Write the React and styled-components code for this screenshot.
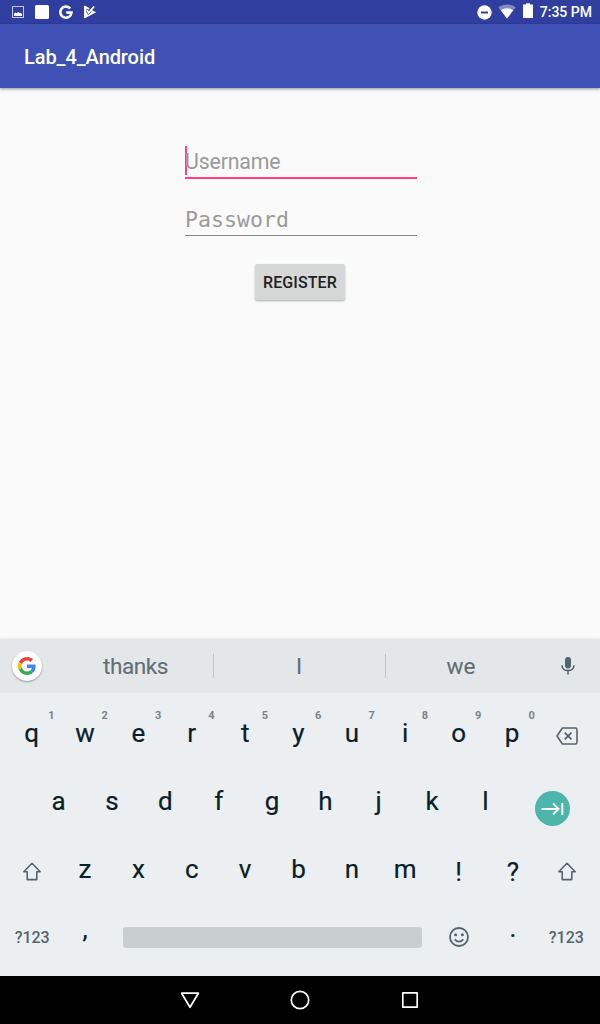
import React from "react";
import styled, { createGlobalStyle } from "styled-components";

const Global = createGlobalStyle`
  * { box-sizing: border-box; }
  body { margin: 0; background: #fafafa; font-family: Roboto, sans-serif; }
  svg { display: block; flex: none; }
`;
const Screen = styled.div`
  width: 600px; height: 1024px; display: flex; flex-direction: column; overflow: hidden; background: #fafafa;
`;
const StatusBar = styled.header`
  height: 24px; flex: none; display: flex; justify-content: space-between; background: #303f9f;
`;
const AppBar = styled.div`
  height: 64px; flex: none; padding: 1px 24px 0; display: flex; align-items: center; background: #3f51b5;
  box-shadow: 0 1px 3px rgba(0,0,0,.42); color: #fff; font-size: 20px; font-weight: 500; letter-spacing: -0.08px;
`;
const Clock = styled.span`
  color: #fff; font-size: 14px; font-weight: 500; line-height: 24px; padding-right: 8px;
`;
const StatusRight = styled.div`display: flex;`;
const Form = styled.main`
  flex: 1; display: flex; flex-direction: column; align-items: center; padding: 58px 0 0 2px;
`;
const Field = styled.label`
  display: flex; align-items: center; width: 232px; height: ${p => (p.$active ? 33 : 32)}px;
  margin-bottom: ${p => (p.$active ? 25 : 28)}px; padding-bottom: ${p => (p.$active ? 1 : 0)}px;
  border-bottom: ${p => (p.$active ? "2px solid #ff4081" : "1px solid #868686")};
  color: #9b9b9b; font-size: ${p => (p.$mono ? 21.5 : 21.3)}px; line-height: 30px;
  letter-spacing: ${p => (p.$mono ? 0.05 : -0.15)}px;
  font-family: ${p => (p.$mono ? '"DejaVu Sans Mono", monospace' : "Roboto, sans-serif")};
`;
const Caret = styled.i`width: 2px; height: 29px; margin: 0 -2px 1px 0; background: #ff4081;`;
const Placeholder = styled.span`padding-top: ${p => p.$drop || 0}px;`;
const Register = styled.button`
  width: 90px; height: 36px; border: 0; border-radius: 2px; padding: 1px 0 0; margin-right: 2px;
  background: #d6d8d7; color: #212121; letter-spacing: 0.1px;
  font: 500 16px Roboto, sans-serif; box-shadow: 0 1px 2px rgba(0,0,0,.32); white-space: nowrap;
`;
const Suggestions = styled.div`
  height: 54px; flex: none; display: flex; align-items: center; background: #e3e7ea; color: #616e74;
  font-size: 22.6px; box-shadow: 0 -1px 2px rgba(0,0,0,.06);
`;
const GoogleButton = styled.div`
  width: 30px; height: 30px; margin: 0 11px 0 12px; border-radius: 50%; background: #fff; display: flex;
  align-items: center; justify-content: center; box-shadow: 0 1px 2px rgba(0,0,0,.35);
`;
const Word = styled.span`
  width: ${p => p.$w}px; text-align: center; padding: 0 ${p => p.$pr || 0}px 0 ${p => p.$pl || 0}px;
  letter-spacing: ${p => p.$tracking || 0}px; -webkit-text-stroke: .1px currentColor;
`;
const Divider = styled.i`width: 1px; height: 24px; background: #bfc6c9;`;
const MicSlot = styled.div`flex: 1; display: flex; justify-content: center; padding-right: 1px;`;
const Keyboard = styled.section`
  height: 283px; flex: none; padding: 5px 8px 0 5px; background: #ebeff2; color: #0a2029;
`;
const Row = styled.div`
  display: grid; grid-template-columns: ${p => p.$columns || "repeat(11, minmax(0, 1fr))"};
  height: 68px; padding-left: ${p => p.$indent || 0}px;
`;
const Key = styled.div`
  position: relative; grid-column: span ${p => p.$span || 1}; min-width: 0; display: flex; align-items: center;
  justify-content: center; font-size: 26px; line-height: 30px; -webkit-text-stroke: .2px currentColor;
  padding: ${p => p.$drop ?? 2}px 0 ${p => p.$lift || 0}px ${p => p.$shift || 0}px;
`;
const Hint = styled.span`
  position: absolute; right: -1px; top: 11px; width: 16px; text-align: center; font-size: 11px; line-height: 13px;
  font-weight: 700; color: #78858b; -webkit-text-stroke: 0;
`;
const ModeLabel = styled.span`font-size: 16px; font-weight: 500; color: #54656d; -webkit-text-stroke: 0;`;
const SpaceBar = styled.div`width: 299px; height: 21px; flex: none; border-radius: 3px; background: #c9ced1;`;
const NextButton = styled.div`
  width: 35px; height: 35px; border-radius: 50%; background: #4db6ac; display: flex; align-items: center; justify-content: center;
`;
const NavBar = styled.nav`
  height: 48px; flex: none; display: flex; justify-content: center; align-items: center; gap: 86px; background: #000;
`;

const NotificationIcons = () => (
  <svg width="104" height="24" viewBox="0 0 104 24" fill="#fff">
    <rect x="12.5" y="6.5" width="11" height="11" fill="none" stroke="#c5cae6" />
    <path d="M14 16v-2.5l1.5-1 1 .8 2-1.3 1.2 1.2 1-.5 1.3 1.3v2z" />
    <rect x="35" y="5" width="14" height="14" rx="1.5" />
    <path d="M70.2 8.5A5.6 5.6 0 1 0 71.5 12.5H66.2" fill="none" stroke="#fff" strokeWidth="2.6" />
    <path d="M84 6.5Q84 5.3 85.1 5.8L89.8 8.3 88.6 9.6 86.7 8.8 86 11 88.3 13.5 91.6 10 96.3 12.2 85.2 18Q84 18.5 84 17.3z" />
    <path d="m86.6 10.2 2.2 2.3 5.3-6" fill="none" stroke="#fff" strokeWidth="1.8" />
    <path d="m86.3 12.2 2.3 2.2 3-3" fill="none" stroke="#303f9f" strokeWidth=".8" />
  </svg>
);
const SystemIcons = () => (
  <svg width="64" height="24" viewBox="476 0 64 24" fill="#fff">
    <circle cx="484.5" cy="12.5" r="7.2" />
    <path d="M481 11.5h7v2h-7z" fill="#303f9f" />
    <path d="M498.3 7.3q8.7-5.8 17.4 0L507 18.5z" opacity=".4" />
    <path d="M500.8 10.2q6.2-4 12.4 0L507 18.5z" />
    <path d="M523 4.5h3V3.3h4v1.2h3V18h-10z" />
  </svg>
);
const GoogleG = () => (
  <svg width="18" height="18" viewBox="0 0 48 48">
    <path fill="#ea4335" d="M24 9.5c3.5 0 6.7 1.2 9.2 3.6l6.9-6.9C35.9 2.4 30.5 0 24 0 14.6 0 6.5 5.4 2.6 13.2l8 6.2C12.4 13.7 17.7 9.5 24 9.5z" />
    <path fill="#4285f4" d="M47 24.6c0-1.6-.2-3.1-.4-4.6H24v9h12.9c-.6 3-2.2 5.5-4.7 7.2l7.7 6C44.4 38 47 31.8 47 24.6z" />
    <path fill="#fbbc05" d="M10.5 28.6a14.5 14.5 0 0 1 0-9.2l-8-6.2a24 24 0 0 0 0 21.6z" />
    <path fill="#34a853" d="M24 48c6.5 0 11.9-2.1 15.9-5.8l-7.7-6c-2.2 1.4-4.9 2.3-8.2 2.3-6.3 0-11.6-4.2-13.5-9.9l-8 6.2C6.5 42.6 14.6 48 24 48z" />
  </svg>
);
const Mic = () => (
  <svg width="16" height="20" viewBox="0 0 16 20" fill="none" stroke="#54656d" strokeWidth="1.6">
    <rect x="5" y="1" width="6" height="11.4" rx="3" fill="#54656d" stroke="none" />
    <path d="M2 9.2c0 3.2 2.5 5.3 6 5.3s6-2.1 6-5.3M8 14.5v4" />
  </svg>
);
const Backspace = () => (
  <svg width="22" height="18" viewBox="0 0 22 18" fill="none" stroke="#54656d" strokeWidth="1.6">
    <path d="M6.4 1h13.1q1.5 0 1.5 1.5v13q0 1.5-1.5 1.5H6.4L1 9z" strokeLinejoin="round" />
    <path d="m8.7 5.6 6.8 6.8m0-6.8-6.8 6.8" strokeWidth="1.8" />
  </svg>
);
const Shift = () => (
  <svg width="20" height="19" viewBox="0 0 20 19" fill="none" stroke="#54656d" strokeWidth="1.6">
    <path d="M10 1.3 18.2 9.7H14.8V17.6H5.2V9.7H1.8z" strokeLinejoin="round" />
  </svg>
);
const NextIcon = () => (
  <svg width="23" height="14" viewBox="0 0 23 14" fill="none" stroke="#fff" strokeWidth="2">
    <path d="M.5 7H17M12 1.5 17.5 7 12 12.5M21.3 1v12" />
  </svg>
);
const Smile = () => (
  <svg width="20" height="20" viewBox="0 0 20 20" fill="none" stroke="#54656d" strokeWidth="1.8">
    <circle cx="10" cy="10" r="9" />
    <path d="M5.7 12.3q4.3 4.8 8.6 0" />
    <circle cx="6.6" cy="7.8" r="1.5" fill="#54656d" stroke="none" />
    <circle cx="13.4" cy="7.8" r="1.5" fill="#54656d" stroke="none" />
  </svg>
);
const NavIcon = ({ children }) => (
  <svg width="24" height="24" viewBox="0 0 24 24" fill="none" stroke="#fff" strokeWidth="1.7" strokeLinejoin="round">{children}</svg>
);

export default function App() {
  return (
    <Screen>
      <Global />
      <StatusBar>
        <NotificationIcons />
        <StatusRight><SystemIcons /><Clock>7:35 PM</Clock></StatusRight>
      </StatusBar>
      <AppBar>Lab_4_Android</AppBar>
      <Form>
        <Field $active><Caret /><Placeholder $drop={2}>Username</Placeholder></Field>
        <Field $mono><Placeholder>Password</Placeholder></Field>
        <Register>REGISTER</Register>
      </Form>
      <Suggestions>
        <GoogleButton><GoogleG /></GoogleButton>
        <Word $w={160} $pl={5} $tracking={-0.45}>thanks</Word>
        <Divider />
        <Word $w={171} $pr={1}>I</Word>
        <Divider />
        <Word $w={150}>we</Word>
        <MicSlot><Mic /></MicSlot>
      </Suggestions>
      <Keyboard>
        <Row>
          {[..."qwertyuiop"].map((c, i) => <Key key={c}>{c}<Hint>{(i + 1) % 10}</Hint></Key>)}
          <Key $drop={7} $shift={3}><Backspace /></Key>
        </Row>
        <Row $indent={27} $columns="repeat(9, minmax(0, 1fr)) minmax(0, 1.5fr)">
          {[..."asdfghjkl"].map(c => <Key key={c}>{c}</Key>)}
          <Key $drop={17} $shift={2}><NextButton><NextIcon /></NextButton></Key>
        </Row>
        <Row>
          <Key $drop={6}><Shift /></Key>
          {[..."zxcvbnm"].map(c => <Key key={c}>{c}</Key>)}
          <Key $drop={7}>!</Key>
          <Key $drop={7} $shift={2}>?</Key>
          <Key $drop={6} $shift={3}><Shift /></Key>
        </Row>
        <Row>
          <Key $drop={4} $shift={1}><ModeLabel>?123</ModeLabel></Key>
          <Key $drop={0} $lift={14}>,</Key>
          <Key $span={6} $drop={2} $shift={1}><SpaceBar /></Key>
          <Key $drop={2} $shift={1}><Smile /></Key>
          <Key $drop={0} $lift={16} $shift={2}>.</Key>
          <Key $drop={4} $shift={2}><ModeLabel>?123</ModeLabel></Key>
        </Row>
      </Keyboard>
      <NavBar>
        <NavIcon><path d="M3.6 5.2h16.8L12 19.3z" /></NavIcon>
        <NavIcon><circle cx="12" cy="12" r="8.7" /></NavIcon>
        <NavIcon><rect x="4.8" y="4.8" width="14.4" height="14.4" /></NavIcon>
      </NavBar>
    </Screen>
  );
}
